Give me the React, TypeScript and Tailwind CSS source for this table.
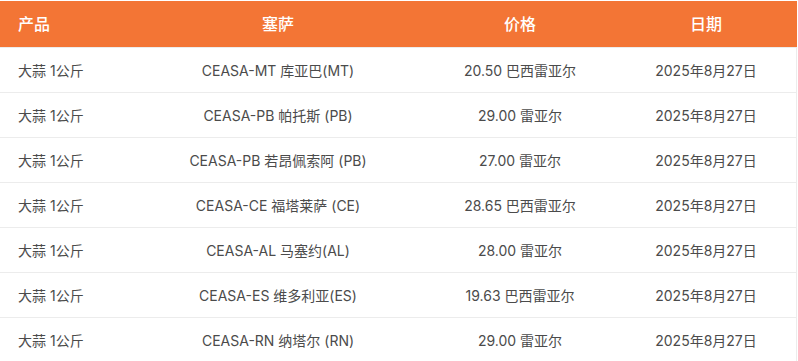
import React from 'react';

const rows = [
  { product: '大蒜 1公斤', ceasa: 'CEASA-MT 库亚巴(MT)', price: '20.50 巴西雷亚尔', date: '2025年8月27日' },
  { product: '大蒜 1公斤', ceasa: 'CEASA-PB 帕托斯 (PB)', price: '29.00 雷亚尔', date: '2025年8月27日' },
  { product: '大蒜 1公斤', ceasa: 'CEASA-PB 若昂佩索阿 (PB)', price: '27.00 雷亚尔', date: '2025年8月27日' },
  { product: '大蒜 1公斤', ceasa: 'CEASA-CE 福塔莱萨 (CE)', price: '28.65 巴西雷亚尔', date: '2025年8月27日' },
  { product: '大蒜 1公斤', ceasa: 'CEASA-AL 马塞约(AL)', price: '28.00 雷亚尔', date: '2025年8月27日' },
  { product: '大蒜 1公斤', ceasa: 'CEASA-ES 维多利亚(ES)', price: '19.63 巴西雷亚尔', date: '2025年8月27日' },
  { product: '大蒜 1公斤', ceasa: 'CEASA-RN 纳塔尔 (RN)', price: '29.00 雷亚尔', date: '2025年8月27日' },
];

const font = 'font-["Inter","Noto_Sans_CJK_SC",sans-serif]';

export default function App() {
  return (
    <div className={`w-[798px] h-[361px] bg-white pt-px overflow-hidden ${font}`}>
      <div className="w-[797px]">
        {/* Header */}
        <div className="grid grid-cols-[131px_294px_190px_182px] h-[46px] items-center bg-[#f37535] text-white text-base font-medium">
          <div className="pl-[18px]">产品</div>
          <div className="text-center">塞萨</div>
          <div className="text-center">价格</div>
          <div className="text-center">日期</div>
        </div>

        {/* Rows */}
        {rows.map((r, i) => (
          <div
            key={i}
            className="grid grid-cols-[131px_294px_190px_182px] h-[45px] pt-[2px] items-center border-t border-r border-[#ececec] text-sm text-[#4b4b4b] first:border-t-0 first:pt-[3px]"
          >
            <div className="pl-[18px]">{r.product}</div>
            <div className="text-center">{r.ceasa}</div>
            <div className="text-center">{r.price}</div>
            <div className="text-center">{r.date}</div>
          </div>
        ))}
      </div>
    </div>
  );
}
